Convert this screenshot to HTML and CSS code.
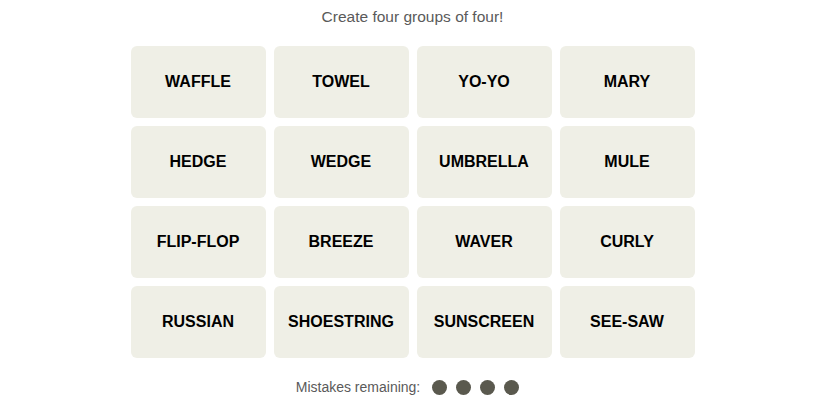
FILE: index.html
```html
<!DOCTYPE html>
<html>
<head>
<meta charset="utf-8">
<link rel="stylesheet" href="styles.css">
</head>
<body>
<main class="game">
  <p class="prompt">Create four groups of four!</p>
  <div class="board">
    <div class="tile">WAFFLE</div>
    <div class="tile">TOWEL</div>
    <div class="tile">YO-YO</div>
    <div class="tile">MARY</div>
    <div class="tile">HEDGE</div>
    <div class="tile">WEDGE</div>
    <div class="tile">UMBRELLA</div>
    <div class="tile">MULE</div>
    <div class="tile">FLIP-FLOP</div>
    <div class="tile">BREEZE</div>
    <div class="tile">WAVER</div>
    <div class="tile">CURLY</div>
    <div class="tile">RUSSIAN</div>
    <div class="tile">SHOESTRING</div>
    <div class="tile">SUNSCREEN</div>
    <div class="tile">SEE-SAW</div>
  </div>
  <div class="mistakes">
    <span class="mistakes-label">Mistakes remaining:</span>
    <span class="dots">
      <span class="dot"></span><span class="dot"></span><span class="dot"></span><span class="dot"></span>
    </span>
  </div>
</main>
</body>
</html>
```
FILE: styles.css
```css
html, body {
  margin: 0;
  padding: 0;
  background: #ffffff;
}
.game {
  display: flex;
  flex-direction: column;
  align-items: center;
  font-family: "Liberation Sans", Arial, sans-serif;
}
.prompt {
  margin: 0;
  padding-top: 8px;
  height: 46px;
  box-sizing: border-box;
  font-size: 15.5px;
  line-height: 18px;
  color: #5a5a5a;
}
.board {
  display: grid;
  grid-template-columns: repeat(4, 135px);
  grid-auto-rows: 72px;
  gap: 8px;
}
.tile {
  background: #efefe6;
  border-radius: 6px;
  display: flex;
  align-items: center;
  justify-content: center;
  font-weight: 700;
  font-size: 16px;
  color: #000000;
}
.mistakes {
  margin-top: 20px;
  padding-right: 10px;
  display: flex;
  align-items: center;
  height: 18px;
  color: #5a5a5a;
  font-size: 14px;
}
.mistakes-label {
  margin-right: 12px;
}
.dots {
  display: flex;
  gap: 9px;
}
.dot {
  width: 15px;
  height: 15px;
  border-radius: 50%;
  background: #5a594e;
}
```
